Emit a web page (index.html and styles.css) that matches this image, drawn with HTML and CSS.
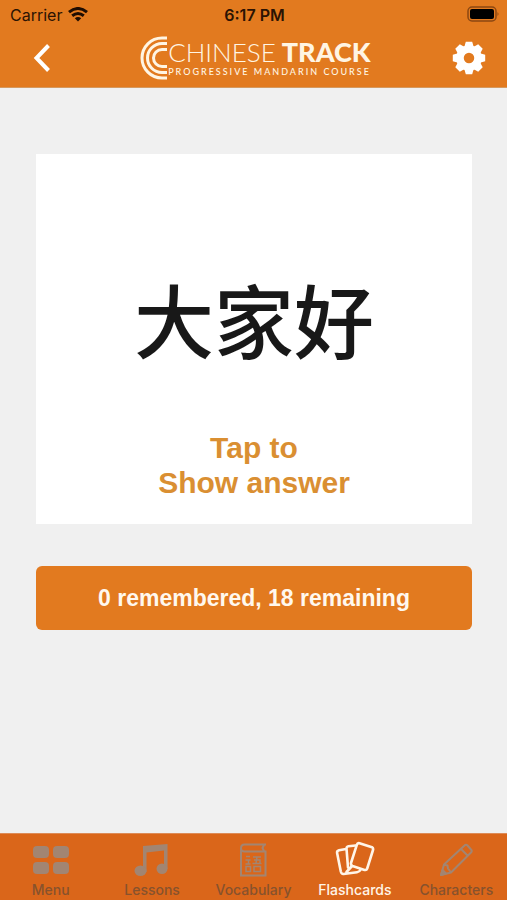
FILE: index.html
```html
<!DOCTYPE html>
<html lang="en">
<head>
<meta charset="utf-8">
<meta name="viewport" content="width=device-width, initial-scale=1">
<title>Chinese Track – Flashcards</title>
<link rel="stylesheet" href="styles.css">
</head>
<body>
<div class="app">
  <header class="header">
    <div class="status">
      <div class="status-left">
        <span>Carrier</span>
        <svg width="20" height="15" viewBox="0 0 20 15" fill="none" stroke="#1f0d02" stroke-width="3" aria-hidden="true">
          <path d="M1 5.2Q10-2.2 19 5.2M4.2 8.8Q10 4.2 15.800 8.800"/>
          <path d="M10 14.500 6.800 11.300Q10 8.900 13.200 11.300Z" fill="#1f0d02" stroke="none"/>
        </svg>
      </div>
      <time class="clock">6:17 PM</time>
      <svg class="battery" width="33" height="17" viewBox="0 0 33 17" aria-hidden="true">
        <rect x="2" y="1" width="28" height="14" rx="4" fill="none" stroke="#8c4712" stroke-width="1.500"/>
        <rect x="4" y="3" width="24" height="10" rx="2" fill="#000"/>
        <path d="M31.500 6q2 2 0 4z" fill="#8c4712"/>
      </svg>
    </div>
    <div class="navbar">
      <button class="icon-button" type="button" aria-label="Back">
        <svg width="18" height="28" viewBox="0 0 18 28" fill="none" stroke="#fff" stroke-width="4" aria-hidden="true"><path d="M15.500 1.500 3.500 14l12 12.500"/></svg>
      </button>
      <div class="brand">
        <svg width="28" height="44" viewBox="0 0 28 44" fill="none" stroke="#fff5e3" stroke-width="3" aria-hidden="true">
          <path d="M27 2h-5a20 20 0 0 0 0 40h5M27 7.500h-5a14.500 14.500 0 0 0 0 29h5M27 13.500h-5a8.500 8.500 0 0 0 0 17h5"/>
        </svg>
        <div class="brand-text">
          <div class="brand-name"><span>CHINESE</span><strong>TRACK</strong></div>
          <div class="tagline">PROGRESSIVE MANDARIN COURSE</div>
        </div>
      </div>
      <button class="icon-button" type="button" aria-label="Settings">
        <svg width="34" height="34" viewBox="-17 -17 34 34" fill="#fff" aria-hidden="true">
          <defs><path id="tooth" d="M-5-10-3.200-16.200H3.200L5-10Z"/></defs>
          <circle r="9" fill="none" stroke="#fff" stroke-width="7.500"/>
          <use href="#tooth"/><use href="#tooth" transform="rotate(45)"/><use href="#tooth" transform="rotate(90)"/><use href="#tooth" transform="rotate(135)"/><use href="#tooth" transform="rotate(180)"/><use href="#tooth" transform="rotate(225)"/><use href="#tooth" transform="rotate(270)"/><use href="#tooth" transform="rotate(315)"/>
        </svg>
      </button>
    </div>
  </header>

  <main class="content">
    <button class="card" type="button">
      <span class="hanzi" lang="zh-Hans">大家好</span>
      <span class="hint">Tap to<br>Show answer</span>
    </button>
    <p class="progress">0 remembered, 18 remaining</p>
  </main>

  <nav class="tabs">
    <a class="tab" href="#menu">
      <svg width="36" height="36" viewBox="0 0 36 36" fill="currentColor" aria-hidden="true">
        <rect x="0" y="5" width="16" height="12" rx="4"/><rect x="20" y="5" width="16" height="12" rx="4"/><rect x="0" y="21" width="16" height="12" rx="4"/><rect x="20" y="21" width="16" height="12" rx="4"/>
      </svg>
      <span>Menu</span>
    </a>
    <a class="tab" href="#lessons">
      <svg width="36" height="36" viewBox="0 0 36 36" fill="currentColor" aria-hidden="true">
        <path d="M9 5 33.500 3v25H30V9.500L12.500 11.500V31H9z"/><ellipse cx="6.500" cy="29.800" rx="6" ry="5.200"/><ellipse cx="28" cy="27.700" rx="5.500" ry="5.200"/>
      </svg>
      <span>Lessons</span>
    </a>
    <a class="tab" href="#vocabulary">
      <svg width="36" height="36" viewBox="0 0 36 36" fill="none" stroke="currentColor" stroke-width="2" aria-hidden="true">
        <path d="M31 3.500H9.500Q6 3.500 6 7V34.500h24.500V10.500H9.500Q6 10.500 6 7M29 4l-1.500 3 1.500 3"/>
        <path stroke-width="1.500" d="M11 15.500h4M10.500 19h5M13.500 19v4M10.500 23h5M11 25.500h4.500v5H11zM18 16h8M22 16l-1 6M19 19h6v3.500M17.500 22.500h9M19 25.500h6.500v5H19z"/>
      </svg>
      <span>Vocabulary</span>
    </a>
    <a class="tab tab-active" href="#flashcards" aria-current="page">
      <svg width="40" height="36" viewBox="0 0 40 36" fill="none" stroke="currentColor" stroke-width="2.600" stroke-linejoin="round" stroke-linecap="round" aria-hidden="true">
        <path d="M24.500 2.200 37 6.200Q38.500 7 38 9L32.200 27.500Q31.500 29.500 29.500 28.900L17.500 25Q15.500 24 16 22L21.800 3.800Q22.500 1.600 24.500 2.200Z"/>
        <path d="M20.500 4.500 13.500 5.300Q11.500 5.600 11.500 7.600L13 26.500M11 8 4 9.300Q1.700 10 2.100 12L5.800 30.500Q6.500 33.200 8.500 33L22 31.300Q24.500 31 25.500 28.800M17 25 11.500 31"/>
      </svg>
      <span>Flashcards</span>
    </a>
    <a class="tab" href="#characters">
      <svg width="36" height="36" viewBox="0 0 36 36" fill="none" stroke="currentColor" stroke-width="2" stroke-linejoin="round" aria-hidden="true">
        <path d="M3 34 6 23.500 26.500 4.500Q28 3 29.500 4.500L33 8.500Q34.500 10 33 11.500L13 31.500ZM6 23.500l3.500 1 .5 3 3 4M23 8l7 7"/>
        <path d="M3 34l1.500-5 3.500 3.500z" fill="currentColor"/>
      </svg>
      <span>Characters</span>
    </a>
  </nav>
</div>
</body>
</html>
```
FILE: styles.css
```css
* {
  box-sizing: border-box;
}

body {
  margin: 0;
  background: #f0f0f0;
  font-family: "Liberation Sans", Arial, sans-serif;
}

button {
  margin: 0;
  padding: 0;
  border: 0;
  background: none;
  font: inherit;
  cursor: pointer;
}

svg {
  display: block;
}

.app {
  display: flex;
  flex-direction: column;
  min-height: 100vh;
}

.header {
  background: #e27a1f;
  border-bottom: 1px solid #d5995f;
}

.status {
  display: grid;
  grid-template-columns: 1fr auto 1fr;
  align-items: center;
  height: 29px;
  padding: 0 8px 0 10px;
  color: #2b1303;
  font: 400 16px/28px Inter, sans-serif;
}

.status-left {
  display: flex;
  align-items: center;
  gap: 6px;
}

.clock {
  font-weight: 600;
}

.battery {
  justify-self: end;
}

.navbar {
  display: flex;
  align-items: center;
  justify-content: space-between;
  height: 58px;
  padding: 0 16px 0 20px;
}

.icon-button {
  display: grid;
  place-items: center;
  width: 44px;
  height: 44px;
}

.brand {
  display: flex;
  align-items: center;
  color: #fff5e3;
  font-family: Lato, sans-serif;
}

.brand-name {
  display: flex;
  align-items: baseline;
  gap: 6px;
  font-size: 26px;
  font-weight: 300;
  line-height: 26px;
}

.brand-name strong {
  font-size: 27px;
  font-weight: 900;
}

.tagline {
  padding-top: 1px;
  font-size: 9px;
  font-weight: 500;
  line-height: 12px;
  letter-spacing: 2px;
}

.content {
  flex: 1;
  padding: 66px 35px 40px 36px;
}

.card {
  display: flex;
  flex-direction: column;
  align-items: center;
  width: 100%;
  padding: 103px 16px 24px;
  background: #fff;
}

.hanzi {
  color: #181818;
  font: 500 80px/120px "Noto Sans CJK SC", sans-serif;
}

.hint {
  margin-top: 53px;
  color: #da8f32;
  font-size: 30px;
  font-weight: 700;
  line-height: 35px;
}

.progress {
  margin: 42px 0 0;
  border-radius: 6px;
  background: #e27a1f;
  color: #fff8ee;
  font-size: 23px;
  font-weight: 700;
  line-height: 64px;
  text-align: center;
}

.tabs {
  display: grid;
  grid-template-columns: repeat(5, 1fr);
  height: 67px;
  border-top: 1px solid #dd8b57;
  background: #da661a;
}

.tab {
  display: flex;
  flex-direction: column;
  align-items: center;
  padding-top: 7px;
  color: #a28572;
  font: 500 14px/16px Inter, sans-serif;
  text-decoration: none;
}

.tab span {
  margin-top: 5px;
  color: #87522d;
}

.tab-active,
.tab-active span {
  color: #fff5e8;
}
```
